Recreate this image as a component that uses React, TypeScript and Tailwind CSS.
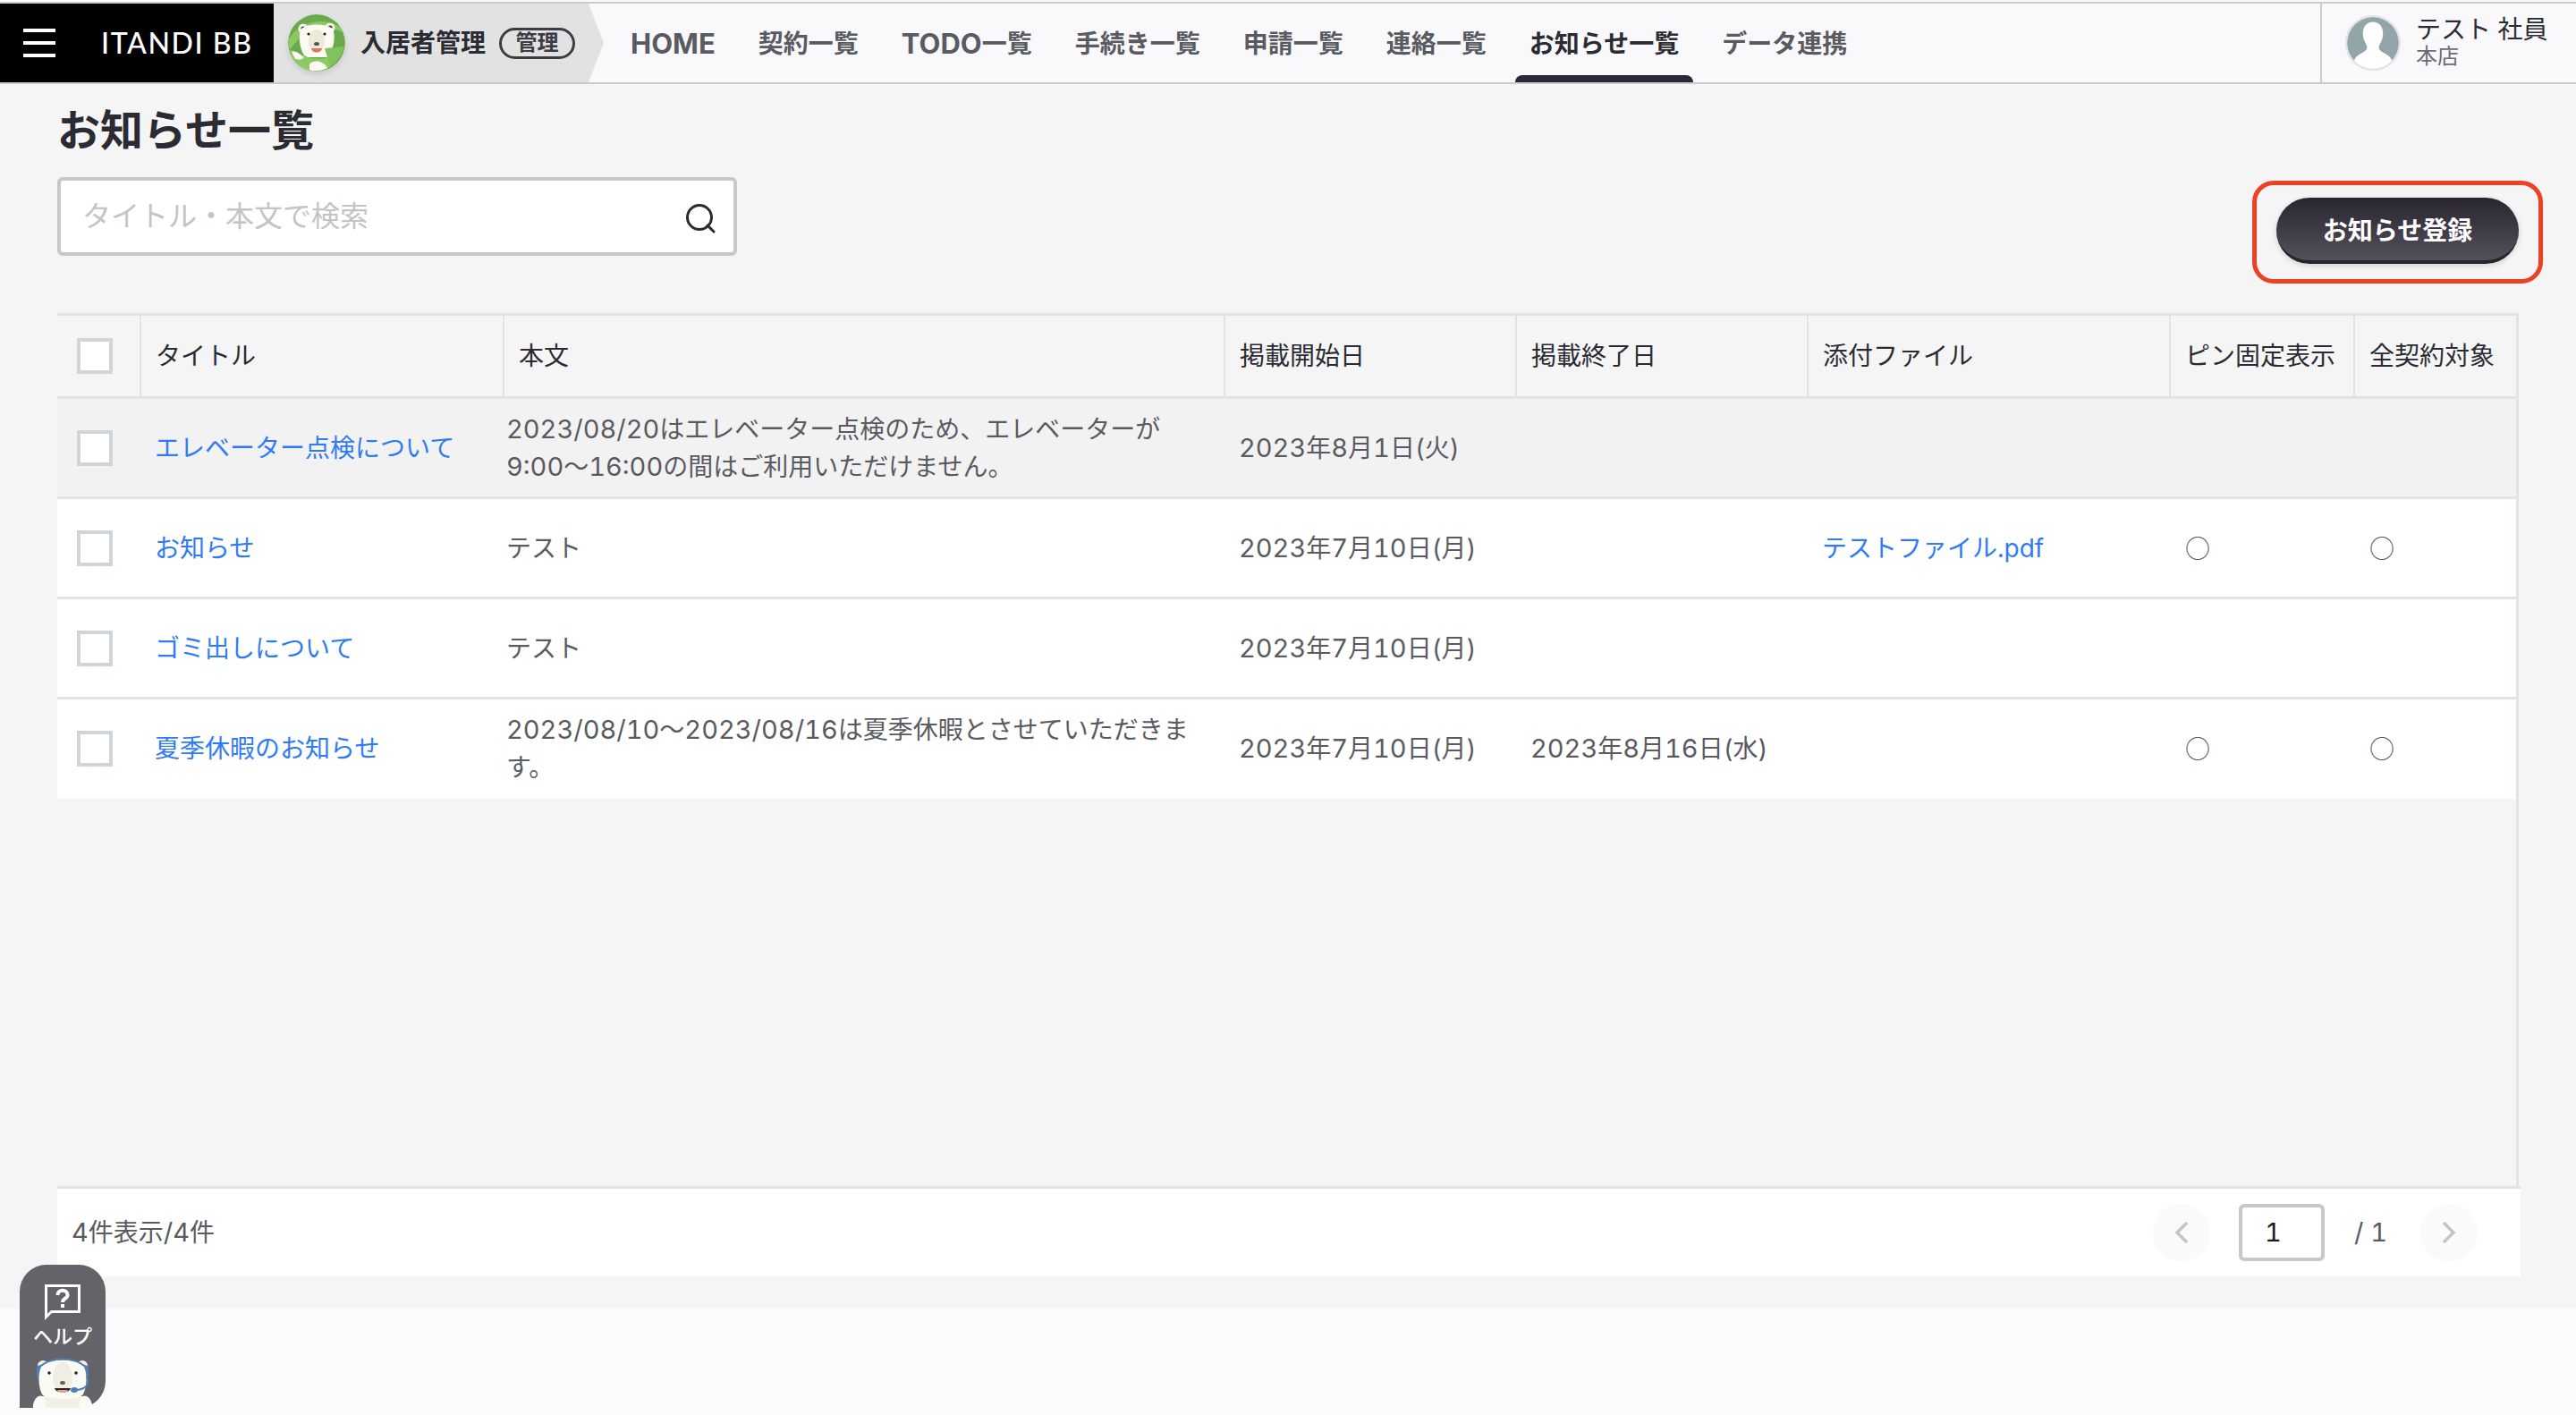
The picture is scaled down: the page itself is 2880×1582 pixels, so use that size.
const font = "font-['Inter','Noto_Sans_CJK_JP','Noto_Sans',sans-serif]";

const navItems = [["HOME", ""], ["", "契約一覧"], ["TODO", "一覧"], ["", "手続き一覧"], ["", "申請一覧"], ["", "連絡一覧"], ["", "お知らせ一覧"], ["", "データ連携"]];

const columns = ["タイトル", "本文", "掲載開始日", "掲載終了日", "添付ファイル", "ピン固定表示", "全契約対象"];

type Row = {
  title: string;
  body: string[];
  start: string;
  end?: string;
  file?: string;
  marks?: boolean;
  hovered?: boolean;
};

const rows: Row[] = [
  {
    title: "エレベーター点検について",
    body: ["2023/08/20はエレベーター点検のため、エレベーターが", "9:00〜16:00の間はご利用いただけません。"],
    start: "2023年8月1日(火)",
    hovered: true,
  },
  { title: "お知らせ", body: ["テスト"], start: "2023年7月10日(月)", file: "テストファイル.pdf", marks: true },
  { title: "ゴミ出しについて", body: ["テスト"], start: "2023年7月10日(月)" },
  {
    title: "夏季休暇のお知らせ",
    body: ["2023/08/10〜2023/08/16は夏季休暇とさせていただきま", "す。"],
    start: "2023年7月10日(月)",
    end: "2023年8月16日(水)",
    marks: true,
  },
];

// digits sit a bit larger than the kana next to them in the original font
function Digits({ text }: { text: string }) {
  return (
    <>
      {text.split(/([0-9/:]+)/).map((part, i) =>
        i % 2 === 1 ? (
          <span key={i} className="text-[29px]">
            {part}
          </span>
        ) : (
          part
        )
      )}
    </>
  );
}

function Check() {
  return <span className="block h-10 w-10 border-4 border-[#d0d5da] bg-white" />;
}

function Mark() {
  return <span className="font-['Noto_Sans_CJK_JP',sans-serif]">○</span>;
}

function BearLogo() {
  return (
    <svg viewBox="0 0 64 64" className="h-16 w-16 shrink-0 rounded-full shadow-[0_3px_6px_rgba(0,0,0,0.12)]">
      <circle cx="32" cy="32" r="32" fill="#6aaa4d" />
      <path d="M0 30C8 12 34 0 58 14L62 20C40 10 16 18 2 40Z" fill="#8cc763" />
      <circle cx="17" cy="16" r="5.5" fill="#f7f5ec" />
      <circle cx="47" cy="15" r="5.5" fill="#f7f5ec" />
      <circle cx="17" cy="16" r="2.6" fill="#3c3a36" />
      <circle cx="47" cy="15" r="2.6" fill="#3c3a36" />
      <path d="M14 17C22 10 41 10 50 16C54 26 50 42 44 48L20 48C14 42 11 28 14 17Z" fill="#fbfaf3" />
      <ellipse cx="32" cy="30" rx="9" ry="13" fill="#eceadb" />
      <circle cx="23" cy="22" r="1.6" fill="#222" />
      <circle cx="41" cy="22" r="1.6" fill="#222" />
      <ellipse cx="32" cy="33" rx="3" ry="2" fill="#5c5045" />
      <path d="M26 38H38C37 44 27 44 26 38Z" fill="#d9795c" />
      <path d="M41 38L62 36C62 44 56 52 48 58L44 48Z" fill="#82c25e" />
      <path d="M2 40C8 40 10 44 12 47C16 44 20 46 22 48C30 50 40 50 44 48L48 58C38 66 14 66 6 52Z" fill="#8ccb62" />
      <path d="M4 42C10 40 14 46 18 48C14 52 12 50 8 50Z" fill="#fbfaf3" />
      <path d="M24 56C28 50 40 52 44 60C36 64 28 64 24 62Z" fill="#fbfaf3" />
    </svg>
  );
}

function HelpBear() {
  return (
    <svg viewBox="0 0 66 56" className="h-14 w-[66px]">
      <path d="M0 56C0 48 4 44 10 43H56C62 44 66 48 66 56Z" fill="#f3f1e6" />
      <path d="M6 43C10 41 13 44 14 50V56H0C0 50 2 45 6 43ZM60 43C56 41 53 44 52 50V56H66C66 50 64 45 60 43Z" fill="#fbfbf6" />
      <circle cx="11" cy="9" r="6" fill="#f3f1e6" />
      <circle cx="55" cy="9" r="6" fill="#f3f1e6" />
      <rect x="4" y="8" width="9" height="16" rx="4.5" fill="#4f7fb5" />
      <rect x="53" y="8" width="9" height="16" rx="4.5" fill="#4f7fb5" />
      <path d="M11 42C5 34 5 14 11 7C23 1 43 1 55 7C61 14 61 34 55 42C47 47 19 47 11 42Z" fill="#fbfbf6" />
      <path d="M9 9C21 -1 45 -1 57 9" fill="none" stroke="#4f7fb5" strokeWidth="2" />
      <ellipse cx="33" cy="22" rx="11" ry="17" fill="#f0eee2" />
      <circle cx="18" cy="17" r="1.8" fill="#222" />
      <circle cx="48" cy="17" r="1.8" fill="#222" />
      <ellipse cx="33" cy="28" rx="3" ry="2" fill="#6b5f50" />
      <path d="M24 34H42C41 40 25 40 24 34Z" fill="#2b2622" />
      <path d="M27 36H39C38 40 28 40 27 36Z" fill="#e7a08a" />
      <path d="M60 20C63 30 60 35 48 36" fill="none" stroke="#4f7fb5" strokeWidth="2" />
      <ellipse cx="46" cy="36" rx="4" ry="3" fill="#4f7fb5" />
    </svg>
  );
}

export default function App() {
  return (
    <div className={`${font} relative flex h-[1582px] flex-col overflow-hidden bg-[#fbfbfb] text-[28px] leading-[42px] tabular-nums text-[#5a5a62]`}>
      <header className="mt-[2px] flex h-[92px] border-y-2 border-[#cbcbcb] bg-[#f9f9fb]">
        <div className="flex w-[306px] shrink-0 items-center bg-black pl-[26px]">
          <div className="flex h-8 w-9 flex-col justify-between">
            <span className="h-1 bg-white" />
            <span className="h-1 bg-white" />
            <span className="h-1 bg-white" />
          </div>
          <span className="ml-[51px] font-['Lato',sans-serif] text-[32px] font-medium tracking-[1.6px] text-white">ITANDI BB</span>
        </div>
        <div className="flex w-[369px] shrink-0 items-center bg-[#e2e2e2] pl-4 [clip-path:polygon(0_0,352px_0,100%_50%,352px_100%,0_100%)]">
          <BearLogo />
          <span className="ml-[17px] font-bold text-[#2b2b33]">入居者管理</span>
          <span className="ml-[15px] flex h-[35px] w-[85px] items-center justify-center rounded-full border-[3px] border-[#3d3c45] text-[24px] font-bold leading-none text-[#3d3c45]">
            管理
          </span>
        </div>
        <nav className="ml-[30px] flex flex-1 gap-[48px]">
          {navItems.map(([latin, kana]) => (
            <a
              key={latin + kana}
              className={
                kana === "お知らせ一覧"
                  ? "relative flex items-center whitespace-nowrap pt-[2px] font-bold text-[#2b2b33] before:absolute before:-inset-x-4 before:bottom-0 before:h-2 before:rounded-t-lg before:bg-[#2b2833]"
                  : "relative flex items-center whitespace-nowrap pt-[2px] font-bold text-[#5a5a62]"
              }
            >
              {latin && <span className="text-[31px]">{latin}</span>}
              {kana}
            </a>
          ))}
        </nav>
        <div className="flex w-[286px] shrink-0 items-center border-l-2 border-[#cbcbcb] pl-[26px]">
          <svg viewBox="0 0 62 62" className="h-[62px] w-[62px] rounded-full border-2 border-[#dfe3e5]">
            <circle cx="31" cy="31" r="31" fill="#91a5ab" />
            <path d="M19 20C19 10 25 6 31 6C37 6 43 10 43 20C43 28 39 31 38 36C38 41 44 42 49 46C53 49 54 52 53 54C40 66 22 66 9 54C8 52 9 49 13 46C18 42 24 41 24 36C23 31 19 28 19 20Z" fill="#fff" />
          </svg>
          <div className="ml-[17px] flex -translate-y-[2px] flex-col">
            <span className="leading-[34px] text-[#2b2b33]">テスト&nbsp;社員</span>
            <span className="text-[24px] leading-[26px] text-[#6b6b72]">本店</span>
          </div>
        </div>
      </header>

      <main className="flex h-[1369px] flex-col bg-[#f5f5f5] px-[64px]">
        <h1 className="mt-[22px] text-[48px] font-bold leading-[60px] text-[#2b2b33]">お知らせ一覧</h1>
        <div className="flex h-[110px] items-start justify-between">
          <div className="mt-[22px] flex h-[88px] w-[760px] items-center justify-between rounded-md border-4 border-[#c8c8c8] bg-white pl-6 pr-[20px]">
            <span className="text-[32px] text-[#c4c4c4]">タイトル・本文で検索</span>
            <svg viewBox="0 0 34 34" className="mt-1 h-[34px] w-[34px]" fill="none" stroke="#2b2b33" strokeWidth="3">
              <circle cx="16" cy="16" r="13.5" />
              <path d="M25 25L32 32" strokeLinecap="round" />
            </svg>
          </div>
          <div className="relative mt-[45px] flex h-[74px] w-[271px] items-center justify-center rounded-full border-b-[4px] border-[#26232c] bg-[linear-gradient(#2a2630,#54505c)] pt-1 text-[28px] font-bold text-white shadow-[0_2px_6px_rgba(0,0,0,0.15)] after:absolute after:-inset-x-[27px] after:-top-[19px] after:-bottom-[26px] after:rounded-[24px] after:border-[5px] after:border-[#ee4022]">
            お知らせ登録
          </div>
        </div>

        <div className="mt-[64px] flex h-[976px] flex-col border-r-[3px] border-[#e0e3e8]">
          <table className="w-full table-fixed border-collapse">
            <colgroup>
              <col className="w-[93px]" />
              <col className="w-[406px]" />
              <col className="w-[806px]" />
              <col className="w-[326px]" />
              <col className="w-[326px]" />
              <col className="w-[405px]" />
              <col className="w-[206px]" />
              <col />
            </colgroup>
            <thead>
              <tr className="h-[93px] border-y-[3px] border-[#e0e3e8] text-left text-[#2b2b33]">
                <th className="border-r-2 border-[#e0e3e8] pl-[22px]">
                  <Check />
                </th>
                {columns.map((col, i) => (
                  <th key={col} className={`${i < 6 ? "border-r-2" : ""} whitespace-nowrap border-[#e0e3e8] pl-[16px] font-normal`}>
                    {col}
                  </th>
                ))}
              </tr>
            </thead>
            <tbody>
              {rows.map((row) => (
                <tr key={row.title} className={`${row.hovered ? "bg-[#f2f2f3]" : "bg-white"} h-[112px] border-b-[3px] border-[#e0e3e8] last:border-b-0`}>
                  <td className="pl-[22px]">
                    <Check />
                  </td>
                  <td className="pl-[16px] text-[#2f7bf5]">{row.title}</td>
                  <td className="whitespace-nowrap pl-[3px]">
                    {row.body.map((line) => (
                      <div key={line}>
                        <Digits text={line} />
                      </div>
                    ))}
                  </td>
                  <td className="pl-[16px]">
                    <Digits text={row.start} />
                  </td>
                  <td className="pl-[16px]">{row.end && <Digits text={row.end} />}</td>
                  <td className="pl-[16px] text-[#2f7bf5]">{row.file}</td>
                  <td className="pl-[17px]">{row.marks && <Mark />}</td>
                  <td className="pl-[17px]">{row.marks && <Mark />}</td>
                </tr>
              ))}
            </tbody>
          </table>
        </div>

        <div className="-mr-[2px] flex h-[101px] shrink-0 items-center justify-between border-t-[3px] border-[#e0e3e8] bg-white pl-4 pr-[48px]">
          <span>
            <Digits text="4件表示/4件" />
          </span>
          <div className="flex items-center">
            <span className="flex h-16 w-16 items-center justify-center rounded-full bg-[#fafafa]">
              <svg viewBox="0 0 16 26" className="h-[26px] w-4" fill="none" stroke="#c4c4c4" strokeWidth="3.5">
                <path d="M14 2L3 13L14 24" />
              </svg>
            </span>
            <span className="ml-8 flex h-16 w-[96px] items-center rounded-md border-4 border-[#c8c8c8] pl-[25px] text-[29px] text-[#1c1c20]">1</span>
            <span className="ml-[33px] w-[42px] text-[29px]">/ 1</span>
            <span className="ml-[32px] flex h-16 w-16 items-center justify-center rounded-full bg-[#fafafa]">
              <svg viewBox="0 0 16 26" className="h-[26px] w-4" fill="none" stroke="#c4c4c4" strokeWidth="3.5">
                <path d="M2 2L13 13L2 24" />
              </svg>
            </span>
          </div>
        </div>
      </main>

      <div className="absolute left-[22px] top-[1414px] flex h-[160px] w-[96px] flex-col items-center rounded-t-[30px] rounded-br-[30px] bg-[#65636a] pt-[22px] text-white">
        <svg viewBox="0 0 40 40" className="h-[40px] w-[40px]">
          <path d="M0 0H40V32H8L0 40Z M3 3V33L7 29H37V3Z" fill="#fff" fillRule="evenodd" />
          <path d="M14.5 12C14.5 5 25.5 5 25.5 12C25.5 16 20 15.500 20 20" fill="none" stroke="#fff" strokeWidth="4" />
          <rect x="18" y="22" width="4" height="4" fill="#fff" />
        </svg>
        <span className="mt-[2px] text-[22px] font-medium leading-[32px]">ヘルプ</span>
        <div className="mt-auto overflow-hidden">
          <HelpBear />
        </div>
      </div>
    </div>
  );
}
